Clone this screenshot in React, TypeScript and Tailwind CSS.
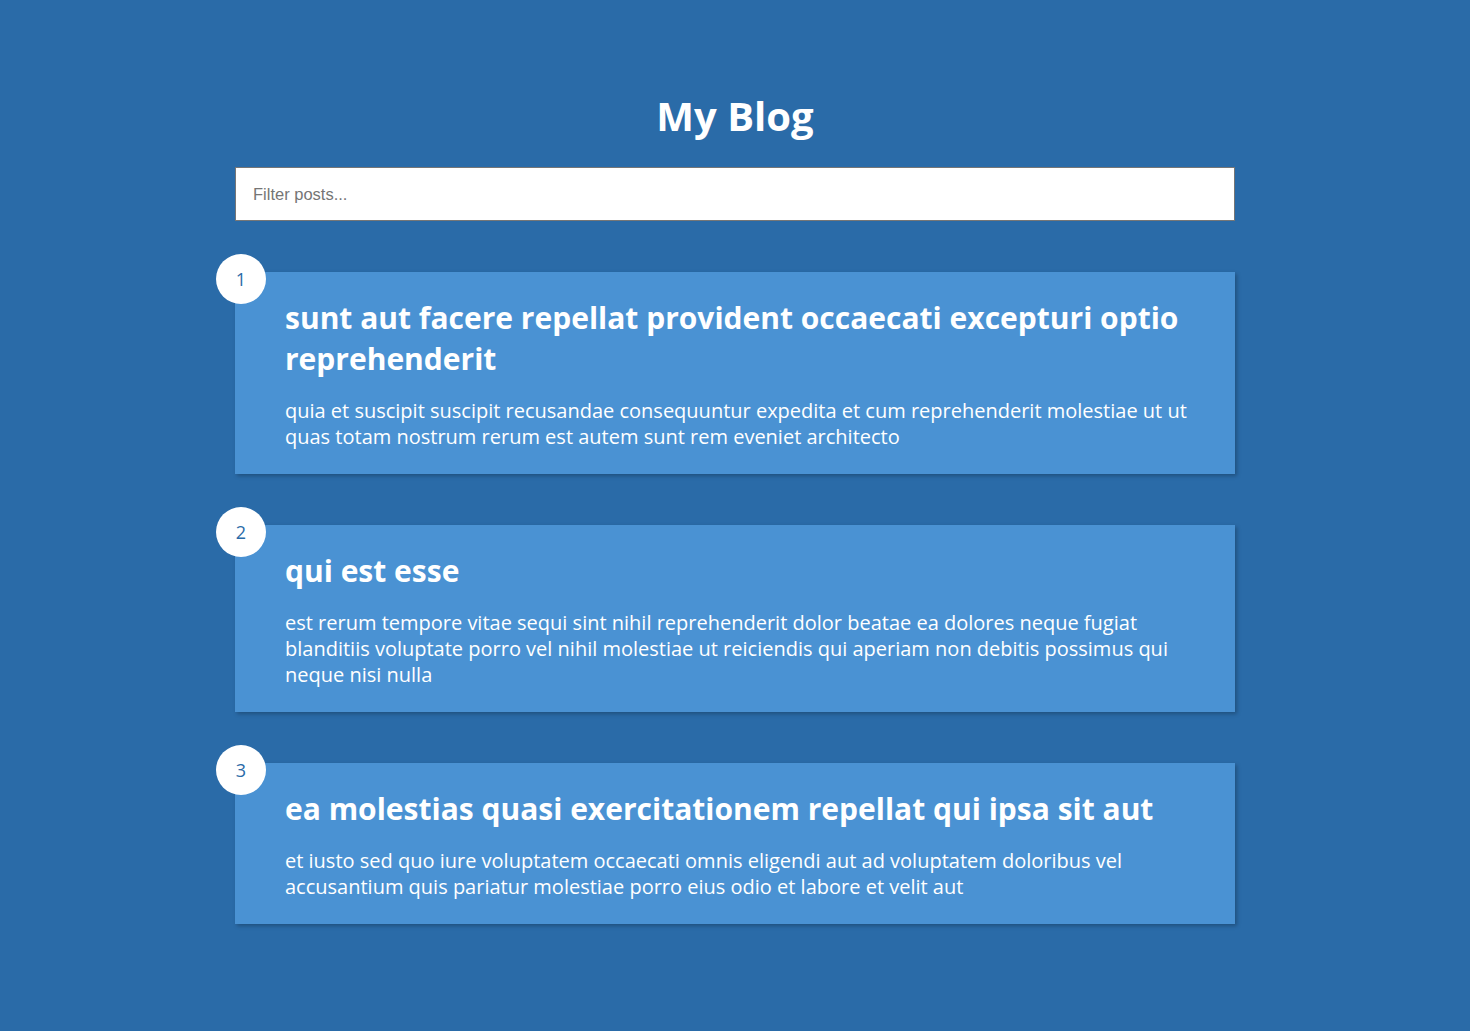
import React from "react";

const posts = [
  {
    id: 1,
    title: "sunt aut facere repellat provident occaecati excepturi optio reprehenderit",
    body: "quia et suscipit suscipit recusandae consequuntur expedita et cum reprehenderit molestiae ut ut quas totam nostrum rerum est autem sunt rem eveniet architecto",
  },
  {
    id: 2,
    title: "qui est esse",
    body: "est rerum tempore vitae sequi sint nihil reprehenderit dolor beatae ea dolores neque fugiat blanditiis voluptate porro vel nihil molestiae ut reiciendis qui aperiam non debitis possimus qui neque nisi nulla",
  },
  {
    id: 3,
    title: "ea molestias quasi exercitationem repellat qui ipsa sit aut",
    body: "et iusto sed quo iure voluptatem occaecati omnis eligendi aut ad voluptatem doloribus vel accusantium quis pariatur molestiae porro eius odio et labore et velit aut",
  },
];

export default function App() {
  return (
    <div className="min-h-screen bg-[#2a6ba8] font-['Open_Sans',sans-serif] text-white">
      <div className="mx-auto w-[1000px] pt-[86px] pb-16">
        <h1 className="text-center text-[40px] font-bold leading-[60px]">My Blog</h1>

        <input
          type="text"
          placeholder="Filter posts..."
          className="mt-[21px] block h-[54px] w-full border border-[#767676] bg-white px-[17px] font-['Liberation_Sans',sans-serif] text-[16.5px] text-gray-800 placeholder:text-[#757575] outline-none"
        />

        <div className="mt-[51px] flex flex-col gap-[51px]">
          {posts.map((post) => (
            <div
              key={post.id}
              className="relative bg-[#4a92d3] pt-[25px] pb-[24px] pl-[50px] pr-[40px] shadow-[2px_2px_4px_rgba(0,0,0,0.25)]"
            >
              {/* number badge */}
              <div className="absolute -left-[19px] -top-[18px] flex h-[50px] w-[50px] items-center justify-center rounded-full bg-white text-[18px] font-normal text-[#2a6ba8]">
                {post.id}
              </div>
              <h2 className="text-[30px] font-bold leading-[41px]">{post.title}</h2>
              <p className="mt-[19px] text-[20px] leading-[26px]">{post.body}</p>
            </div>
          ))}
        </div>
      </div>
    </div>
  );
}
